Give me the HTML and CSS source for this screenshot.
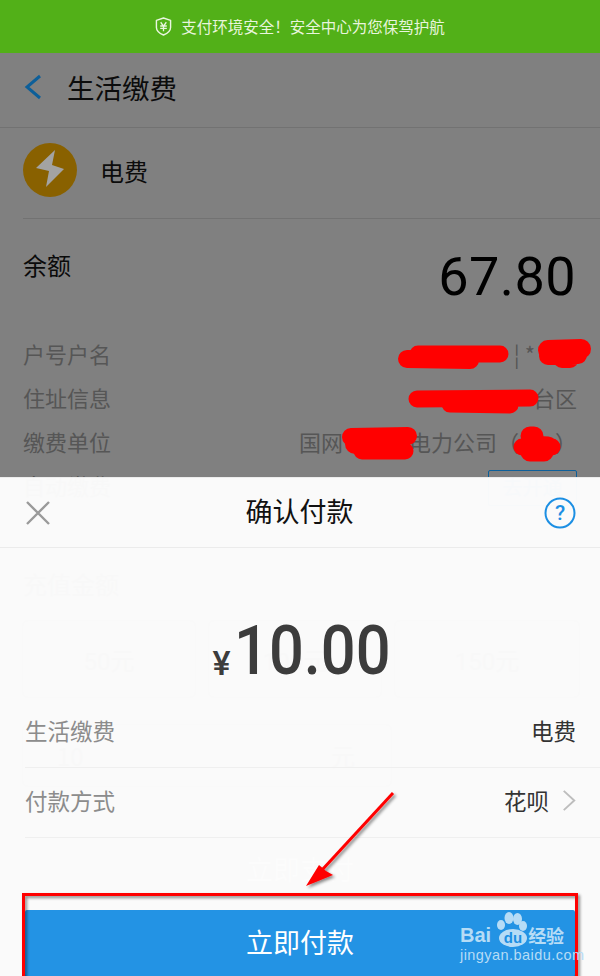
FILE: index.html
```html
<!DOCTYPE html>
<html lang="zh-cn">

<head>
  <meta charset="UTF-8">
  <meta name="viewport" content="width=device-width, initial-scale=1.0">
  <title>确认付款</title>
  <link rel="stylesheet" href="styles.css">
</head>

<body>
  <div class="banner">
    <svg class="shield" viewBox="0 0 18 20" width="17" height="19">
      <path d="M9 1 L16.5 3.5 V11 C16.5 15 12.5 17.5 9 19 C5.5 17.5 1.5 15 1.5 11 V3.5 Z" fill="none" stroke="#eaf6e0" stroke-width="1.5" stroke-linejoin="round" />
      <path d="M6 5.5 L9 9.5 L12 5.5 M5.5 9.5 H12.5 M5.5 12 H12.5 M9 9.5 V15" fill="none" stroke="#eaf6e0" stroke-width="1.4" />
    </svg>
    <span>支付环境安全！安全中心为您保驾护航</span>
  </div>

  <div class="page">
    <div class="nav">
      <svg class="back" viewBox="0 0 18 26" width="18" height="26">
        <path d="M16 2 L3 13 L16 24" fill="none" stroke="#0d5f99" stroke-width="3" />
      </svg>
      <span class="nav-title">生活缴费</span>
    </div>

    <div class="biller">
      <svg class="biller-icon" viewBox="0 0 54 54" width="54" height="54">
        <circle cx="27" cy="27" r="27" fill="#896100" />
        <path d="M32 7 L13 25 L26 28 L23 44 L41 26 L29 22 Z" fill="#a3a3a3" />
      </svg>
      <span class="biller-name">电费</span>
    </div>

    <div class="balance">
      <span class="balance-label">余额</span>
      <span class="balance-value">67.80</span>
    </div>

    <div class="info-row"><span>户号户名</span><span>¦ *<i class="gap-c"></i></span></div>
    <div class="info-row"><span>住址信息</span><span>台区</span></div>
    <div class="info-row"><span>缴费单位</span><span>国网<i class="gap-a"></i>电力公司（<i class="gap-b"></i>）</span></div>

    <div class="auto-row">
      <span class="ghost">自动缴费</span>
      <span class="open-btn">去开通</span>
    </div>

    <div class="section-label ghost">充值金额</div>
    <div class="amounts ghost">
      <div class="amount">50元</div>
      <div class="amount">100元</div>
      <div class="amount">150元</div>
    </div>
    <div class="amount-input ghost"><span>10</span><span>元</span></div>
    <div class="pay-ghost">立即支付</div>
    <div class="links">
      <span>缴费记录</span>
      <span>使用帮助</span>
      <span>开通自动缴费</span>
    </div>
  </div>

  <div class="sheet">
    <div class="sheet-head">
      <div class="head-side">
        <svg viewBox="0 0 26 26" width="26" height="26">
          <path d="M2 2 L24 24 M24 2 L2 24" stroke="#9a9a9a" stroke-width="2.4" fill="none" />
        </svg>
      </div>
      <span class="sheet-title">确认付款</span>
      <div class="head-side">
        <svg viewBox="0 0 32 32" width="32" height="32">
          <circle cx="16" cy="16" r="14.5" fill="none" stroke="#1c8fe3" stroke-width="2" />
          <text class="help-mark" x="16" y="23" text-anchor="middle">?</text>
        </svg>
      </div>
    </div>
    <div class="total">
      <span class="total-sign">¥</span><span class="total-value">10.00</span>
    </div>
    <div class="sheet-row">
      <span class="sheet-key">生活缴费</span>
      <span class="sheet-val">电费</span>
    </div>
    <div class="sheet-row">
      <span class="sheet-key">付款方式</span>
      <span class="sheet-val">花呗
        <svg viewBox="0 0 16 26" width="14" height="23">
          <path d="M2 2 L14 13 L2 24" fill="none" stroke="#bdbdbd" stroke-width="2.2" />
        </svg>
      </span>
    </div>
    <div class="pay-btn">立即付款</div>
  </div>

  <!-- scribbles and arrow drawn on top of the screenshot -->
  <svg class="marks" viewBox="0 0 600 976" width="600" height="976">
    <defs>
      <filter id="soft" x="-20%" y="-20%" width="140%" height="140%">
        <feDropShadow dx="2" dy="2" stdDeviation="1.5" flood-color="#000" flood-opacity=".45" />
      </filter>
    </defs>
    <g fill="none" stroke="#ff0000" stroke-linecap="round" stroke-linejoin="round">
      <path d="M418 354 L500 354" stroke-width="17" />
      <path d="M407 359 L470 360" stroke-width="18" />
      <path d="M548 350 L581 349" stroke-width="20" />
      <path d="M548 356 L578 355 M562 359 L570 359" stroke-width="18" />
      <path d="M417 399 L530 398" stroke-width="17" />
      <path d="M450 404 L510 405" stroke-width="17" />
      <path d="M351 437 L408 436" stroke-width="18" />
      <path d="M355 444 L400 444" stroke-width="20" />
      <path d="M362 451 L405 451" stroke-width="17" />
      <path d="M530 436 L534 436 M528 445 L548 446 M530 452 L544 452" stroke-width="19" />
      <path d="M522 447 L552 447" stroke-width="17" />
    </g>
    <g filter="url(#soft)">
      <path d="M393 793 L322 870" fill="none" stroke="#ff0000" stroke-width="3" />
      <path d="M306 886 L319 865 L326 871 L333 875 Z" fill="#ff0000" />
    </g>
    <rect x="23.5" y="894.5" width="553" height="90" fill="none" stroke="#ff0000" stroke-width="3" filter="url(#soft)" />
  </svg>

  <div class="watermark">
    <div class="wm-top">
      <span class="wm-bai">Bai</span>
      <svg viewBox="0 0 48 42" width="48" height="42" class="wm-paw">
        <ellipse cx="20" cy="7" rx="4.5" ry="6" />
        <ellipse cx="28.5" cy="8" rx="4.5" ry="6" />
        <ellipse cx="12" cy="14" rx="4" ry="5" />
        <ellipse cx="34" cy="15" rx="4" ry="5" />
        <ellipse cx="24" cy="27" rx="14" ry="9" />
        <text x="24" y="32" text-anchor="middle" class="wm-du">du</text>
      </svg>
      <span class="wm-cn">经验</span>
    </div>
    <div class="wm-url">jingyan.baidu.com</div>
  </div>
</body>

</html>
```

FILE: styles.css
```css
* {
  box-sizing: border-box;
}

html,
body {
  margin: 0;
  height: 976px;
}

body {
  position: relative;
  width: 600px;
  overflow: hidden;
  background: #808080;
  font-family: "Noto Sans CJK SC", "Liberation Sans", sans-serif;
}

.banner {
  height: 53px;
  padding-bottom: 1px;
  background: #52b018;
  color: #e8f5dd;
  font-size: 15.5px;
  display: flex;
  align-items: center;
  justify-content: center;
  gap: 9px;
}

.page {
  color: #000;
}

/* text that only shows faintly through the sheet */
.ghost {
  color: #404040;
}

.nav {
  height: 75px;
  padding: 0 0 7px 24px;
  display: flex;
  align-items: center;
  gap: 25px;
  border-bottom: 1px solid #727272;
}

.nav-title {
  font-size: 27.5px;
  color: #0c0c0c;
}

.biller {
  height: 91px;
  margin-left: 23px;
  padding-bottom: 6px;
  display: flex;
  align-items: center;
  gap: 23px;
  border-bottom: 1px solid #727272;
}

.biller-name {
  font-size: 24px;
  color: #0c0c0c;
}

.balance {
  height: 112px;
  padding: 26px 24px 0 23px;
  display: flex;
  justify-content: space-between;
  align-items: flex-start;
}

.balance-label {
  margin-top: -2px;
  font-size: 24px;
  line-height: 44px;
  color: #0a0a0a;
}

.balance-value {
  font-family: Roboto, sans-serif;
  font-size: 54px;
  line-height: 64px;
  letter-spacing: .4px;
}

.info-row {
  height: 44px;
  padding: 0 23px;
  display: flex;
  justify-content: space-between;
  align-items: center;
  font-size: 22px;
  color: #565656;
}

.info-row i {
  display: inline-block;
}

.gap-a {
  width: 66px;
}

.gap-b {
  width: 36px;
}

.gap-c {
  width: 42px;
}

.auto-row {
  height: 44px;
  padding: 0 23px;
  display: flex;
  justify-content: space-between;
  align-items: center;
  font-size: 22px;
}

.open-btn {
  width: 89px;
  height: 36px;
  margin-top: 6px;
  border: 1px solid #0d5f99;
  border-radius: 2px;
  text-align: center;
  font-size: 20px;
  line-height: 32px;
  color: #0d5f99;
}

.section-label {
  margin-top: 57px;
  padding-left: 23px;
  font-size: 24px;
  line-height: 40px;
}

.amounts {
  margin: 16px 22px 0;
  display: grid;
  grid-template-columns: 174px 174px 186px;
  gap: 12px;
  font-size: 24px;
}

.amount {
  height: 78px;
  border: 1px solid #666;
  border-radius: 6px;
  display: flex;
  align-items: center;
  justify-content: center;
  font-family: Roboto, "Noto Sans CJK SC", sans-serif;
}

.amount-input {
  width: 370px;
  height: 63px;
  margin: 26px 0 0 22px;
  padding: 0 36px 0 34px;
  border: 1px solid #666;
  border-radius: 6px;
  display: flex;
  justify-content: space-between;
  align-items: center;
  font-size: 24px;
}

.pay-ghost {
  margin-top: 62px;
  text-align: center;
  font-size: 27px;
  color: #d8d8d8;
}

.links {
  margin-top: 42px;
  display: flex;
  justify-content: center;
  gap: 40px;
  font-size: 19px;
  color: #0d5f99;
}

.sheet {
  position: absolute;
  top: 477px;
  left: 0;
  right: 0;
  bottom: 0;
  background: rgba(252, 252, 252, .98);
  border-top: 1px solid #ececec;
  display: flex;
  flex-direction: column;
}

.sheet-head {
  height: 70px;
  flex: none;
  padding: 0 24px 0 25px;
  display: flex;
  justify-content: space-between;
  align-items: center;
  border-bottom: 1px solid #ebebeb;
}

.head-side {
  width: 32px;
  display: flex;
}

.sheet-title {
  margin: -4px 2px 0 0;
  font-size: 27px;
  color: #111;
}

.help-mark {
  font-family: Roboto, sans-serif;
  font-weight: 500;
  font-size: 21px;
  fill: #1c8fe3;
}

.total {
  height: 150px;
  flex: none;
  padding-top: 63px;
  display: flex;
  justify-content: center;
  align-items: flex-start;
  color: #3c3c3c;
  font-family: Roboto, sans-serif;
  font-weight: 500;
}

.total-sign {
  margin-top: 32px;
  margin-right: 3px;
  font-size: 34px;
  line-height: 40px;
}

.total-value {
  width: 154px;
  font-size: 69px;
  line-height: 80px;
  transform: scaleX(.89);
  transform-origin: left;
  white-space: nowrap;
}

.sheet-row {
  height: 70px;
  flex: none;
  margin-left: 25px;
  padding: 0 24px 5px 0;
  display: flex;
  justify-content: space-between;
  align-items: center;
  font-size: 22.5px;
  border-bottom: 1px solid #efefef;
}

.sheet-row:first-of-type {
  height: 69px;
}

.sheet-key {
  color: #8c8c8c;
}

.sheet-val {
  color: #333;
  display: flex;
  align-items: center;
  gap: 13px;
}

.pay-btn {
  height: 67px;
  flex: none;
  margin: 72px 25px 0;
  padding-bottom: 4px;
  background: rgba(28, 143, 227, .97);
  border-radius: 2px;
  box-shadow: inset 0 -1px 0 #1673b8;
  color: #fff;
  font-size: 27px;
  display: flex;
  align-items: center;
  justify-content: center;
}

.marks {
  position: absolute;
  top: 0;
  left: 0;
}

.watermark {
  position: absolute;
  top: 910px;
  left: 460px;
  width: 108px;
  color: #b6dcf6;
}

.wm-top {
  height: 33px;
  display: flex;
  align-items: flex-end;
}

.wm-bai {
  font-family: "Liberation Sans", sans-serif;
  font-weight: 700;
  font-size: 20px;
  line-height: 15px;
}

.wm-paw {
  flex: none;
  margin: 0 0 -10px -2px;
  fill: #b6dcf6;
}

.wm-du {
  font-family: "Liberation Sans", sans-serif;
  font-weight: 700;
  font-size: 15px;
  fill: #1c8fe3;
}

.wm-cn {
  margin-left: -9px;
  font-size: 18px;
  line-height: 15px;
  font-weight: 700;
  white-space: nowrap;
}

.wm-url {
  margin-top: 5px;
  font-family: "Liberation Sans", sans-serif;
  font-size: 14.5px;
  line-height: 14px;
  letter-spacing: .45px;
  white-space: nowrap;
}
```
